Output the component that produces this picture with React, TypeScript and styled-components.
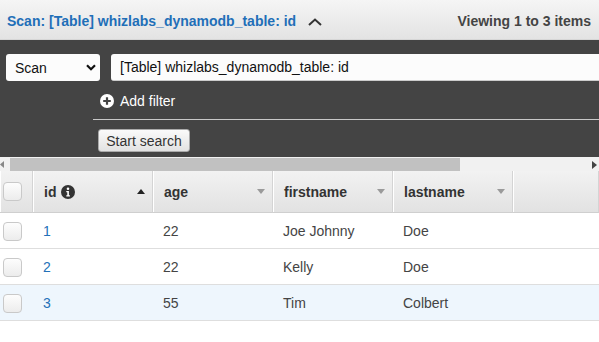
import React from "react";
import styled, { createGlobalStyle } from "styled-components";

const Global = createGlobalStyle`
  html, body { margin: 0; padding: 0; background: #fff; }
  body { font-family: "Liberation Sans", Arial, sans-serif; font-size: 14px; color: #444; overflow: hidden; }
  * { box-sizing: border-box; }
`;

const Page = styled.div`
  width: 599px;
  height: 342px;
  display: flex;
  flex-direction: column;
  overflow: hidden;
`;

const TitleBar = styled.div`
  height: 40px;
  flex: none;
  display: flex;
  align-items: center;
  padding: 2px 8px 0 7px;
  background: linear-gradient(#f5f5f5, #e3e3e3);
  border-bottom: 1px solid #d6d6d6;
`;

const Title = styled.span`
  font-weight: bold;
  font-size: 14px;
  color: #1f6fb8;
`;

const Collapse = styled.svg`
  margin-left: 12px;
  margin-top: 2px;
`;

const Viewing = styled.span`
  margin-left: auto;
  font-weight: bold;
  font-size: 14px;
  color: #444;
`;

const Panel = styled.div`
  background: #444;
  height: 117px;
  flex: none;
  padding: 14px 0 0 6px;
  display: flex;
  flex-direction: column;
`;

const QueryRow = styled.div`
  display: flex;
  gap: 11px;
  height: 27px;
`;

const SelectBox = styled.div`
  width: 94px;
  flex: none;
  background: #fcfcfc;
  border-radius: 3px;
  display: flex;
  align-items: center;
  justify-content: space-between;
  padding: 0 4px 0 9px;
  color: #111;
  font-size: 14px;
`;

const TextInput = styled.div`
  flex: 1;
  background: #fcfcfc;
  border-radius: 3px 0 0 3px;
  border-bottom: 1px solid #ccc;
  display: flex;
  align-items: center;
  padding-left: 9px;
  color: #111;
  font-size: 14px;
`;

const FilterArea = styled.div`
  margin-left: 87px;
  display: flex;
  flex-direction: column;
`;

const AddFilter = styled.div`
  height: 39px;
  display: flex;
  align-items: center;
  gap: 6px;
  padding: 2px 0 0 7px;
  color: #fff;
  font-size: 14px;
  border-bottom: 1px solid #c8c8c8;
`;

const SearchButton = styled.button`
  margin: 9px 0 0 5px;
  align-self: flex-start;
  height: 23px;
  width: 92px;
  padding: 0;
  border: 1px solid #aaa;
  border-radius: 3px;
  background: linear-gradient(#fafafa, #e2e2e2);
  font-family: "Liberation Sans", Arial, sans-serif;
  font-size: 14px;
  color: #333;
`;

const ScrollBar = styled.div`
  height: 14px;
  flex: none;
  background: #f1f1f1;
  display: flex;
  align-items: center;
  position: relative;
`;

const Thumb = styled.div`
  margin-left: 10px;
  width: 450px;
  height: 13px;
  margin-top: 1px;
  background: #c1c1c1;
`;

const Arrow = styled.svg<{ $side: "left" | "right" }>`
  position: absolute;
  top: 4px;
  ${(p) => (p.$side === "left" ? "left: 0;" : "right: 2px;")}
`;

const Grid = styled.div`
  display: grid;
  grid-template-columns: 33px 120px 120px 120px 120px 1fr;
`;

const HeadCell = styled.div<{ $first?: boolean }>`
  height: 42px;
  background: linear-gradient(#f2f2f2, #e2e2e2);
  border-bottom: 1px solid #cfcfcf;
  border-right: 1px solid #d4d4d4;
  box-shadow: inset 1px 0 0 #fff;
  display: flex;
  align-items: center;
  padding: 0 7px 0 ${(p) => (p.$first ? "3px" : "11px")};
  font-weight: bold;
  font-size: 14px;
  color: #333;
  gap: 5px;
`;

const Sort = styled.svg`
  margin-left: auto;
`;

const Check = styled.div`
  width: 19px;
  height: 19px;
  border: 1px solid #c9c9c9;
  border-radius: 4px;
  background: linear-gradient(#fdfdfd, #ececec);
`;

const Cell = styled.div<{ $hl?: boolean; $first?: boolean; $link?: boolean }>`
  height: 36px;
  border-bottom: 1px solid #dedede;
  background: ${(p) => (p.$hl ? "#eef6fd" : "#fff")};
  display: flex;
  align-items: center;
  padding-left: ${(p) => (p.$first ? "3px" : "10px")};
  padding-top: 1px;
  font-size: 14px;
  color: ${(p) => (p.$link ? "#2471b8" : "#444")};
`;

const InfoIcon = () => (
  <svg width="14" height="14" viewBox="0 0 14 14">
    <circle cx="7" cy="7" r="7" fill="#333" />
    <circle cx="7" cy="3.8" r="1.3" fill="#fff" />
    <path d="M5.3 6h2.6v4.3h1v1.2H5.3v-1.2h1V7.2h-1z" fill="#fff" />
  </svg>
);

const SortIcon = ({ up }: { up?: boolean }) => (
  <Sort width="8" height="5" viewBox="0 0 8 5">
    {up ? <path d="M0 5L4 0L8 5z" fill="#222" /> : <path d="M0 0L8 0L4 5z" fill="#9a9a9a" />}
  </Sort>
);

const rows = [
  { id: "1", age: "22", first: "Joe Johnny", last: "Doe" },
  { id: "2", age: "22", first: "Kelly", last: "Doe" },
  { id: "3", age: "55", first: "Tim", last: "Colbert" },
];

export default function App() {
  return (
    <Page>
      <Global />
      <TitleBar>
        <Title>Scan: [Table] whizlabs_dynamodb_table: id</Title>
        <Collapse width="14" height="8" viewBox="0 0 14 8">
          <path d="M1 7L7 1.5L13 7" stroke="#333" strokeWidth="2" fill="none" />
        </Collapse>
        <Viewing>Viewing 1 to 3 items</Viewing>
      </TitleBar>
      <Panel>
        <QueryRow>
          <SelectBox>
            <span>Scan</span>
            <svg width="10" height="7" viewBox="0 0 10 7">
              <path d="M1 1.2L5 5.2L9 1.2" stroke="#111" strokeWidth="2.2" fill="none" />
            </svg>
          </SelectBox>
          <TextInput>[Table] whizlabs_dynamodb_table: id</TextInput>
        </QueryRow>
        <FilterArea>
          <AddFilter>
            <svg width="14" height="14" viewBox="0 0 14 14">
              <circle cx="7" cy="7" r="7" fill="#fff" />
              <path d="M7 3.2v7.6M3.2 7h7.6" stroke="#444" strokeWidth="2.2" />
            </svg>
            <span>Add filter</span>
          </AddFilter>
          <SearchButton>Start search</SearchButton>
        </FilterArea>
      </Panel>
      <ScrollBar>
        <Arrow $side="left" width="4" height="7" viewBox="0 0 4 7">
          <path d="M4 0L0 3.5L4 7z" fill="#888" />
        </Arrow>
        <Thumb />
        <Arrow $side="right" width="5" height="8" viewBox="0 0 5 8">
          <path d="M0 0L5 4L0 8z" fill="#444" />
        </Arrow>
      </ScrollBar>
      <Grid>
        <HeadCell $first>
          <Check />
        </HeadCell>
        <HeadCell>
          id <InfoIcon />
          <SortIcon up />
        </HeadCell>
        <HeadCell>
          age
          <SortIcon />
        </HeadCell>
        <HeadCell>
          firstname
          <SortIcon />
        </HeadCell>
        <HeadCell>
          lastname
          <SortIcon />
        </HeadCell>
        <HeadCell />
        {rows.map((r, i) => {
          const hl = i === 2;
          return (
            <React.Fragment key={r.id}>
              <Cell $hl={hl} $first>
                <Check />
              </Cell>
              <Cell $hl={hl} $link>
                {r.id}
              </Cell>
              <Cell $hl={hl}>{r.age}</Cell>
              <Cell $hl={hl}>{r.first}</Cell>
              <Cell $hl={hl}>{r.last}</Cell>
              <Cell $hl={hl} />
            </React.Fragment>
          );
        })}
      </Grid>
    </Page>
  );
}
